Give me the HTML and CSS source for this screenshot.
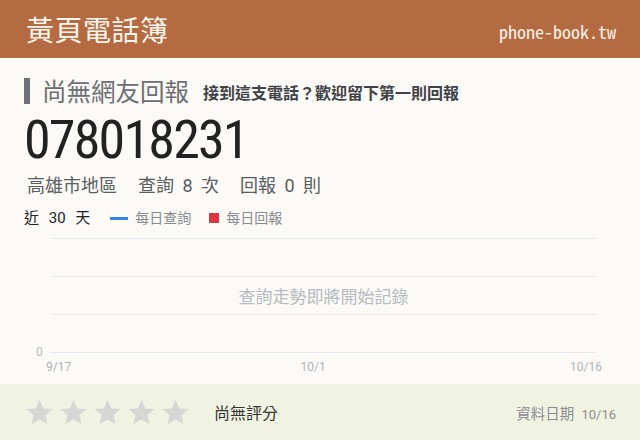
FILE: index.html
```html
<!DOCTYPE html>
<html lang="zh-Hant">
<head>
<meta charset="utf-8">
<title>078018231 - 黃頁電話簿</title>
<link rel="stylesheet" href="styles.css">
</head>
<body>
<header class="topbar">
  <h1 class="brand">黃頁電話簿</h1>
  <span class="domain">phone-book.tw</span>
</header>

<main class="content">
  <div class="status">
    <h2 class="status-title">尚無網友回報</h2>
    <span class="status-hint">接到這支電話？歡迎留下第一則回報</span>
  </div>

  <div class="number">078018231</div>

  <div class="meta">
    <span class="meta-item">高雄市地區</span>
    <span class="meta-item">查詢 8 次</span>
    <span class="meta-item">回報 0 則</span>
  </div>

  <div class="chart-head">
    <span class="range">近 30 天</span>
    <span class="legend"><i class="swatch swatch-line"></i>每日查詢</span>
    <span class="legend"><i class="swatch swatch-box"></i>每日回報</span>
  </div>

  <div class="chart">
    <div class="plot">
      <div class="grid-row"></div>
      <div class="grid-row empty-note">查詢走勢即將開始記錄</div>
      <div class="grid-row"></div>
      <div class="baseline"><span class="y-label">0</span></div>
    </div>
    <div class="x-axis">
      <span>9/17</span>
      <span class="gap-a"></span>
      <span>10/1</span>
      <span class="gap-b"></span>
      <span>10/16</span>
    </div>
  </div>
</main>

<footer class="rating">
  <div class="stars">
    <svg class="star" viewBox="0 0 24 24"><path d="M12 1.5l3.1 7.1 7.7.6-5.9 5 1.8 7.5L12 17.7l-6.7 4 1.8-7.5-5.9-5 7.7-.6z"/></svg>
    <svg class="star" viewBox="0 0 24 24"><path d="M12 1.5l3.1 7.1 7.7.6-5.9 5 1.8 7.5L12 17.7l-6.7 4 1.8-7.5-5.9-5 7.7-.6z"/></svg>
    <svg class="star" viewBox="0 0 24 24"><path d="M12 1.5l3.1 7.1 7.7.6-5.9 5 1.8 7.5L12 17.7l-6.7 4 1.8-7.5-5.9-5 7.7-.6z"/></svg>
    <svg class="star" viewBox="0 0 24 24"><path d="M12 1.5l3.1 7.1 7.7.6-5.9 5 1.8 7.5L12 17.7l-6.7 4 1.8-7.5-5.9-5 7.7-.6z"/></svg>
    <svg class="star" viewBox="0 0 24 24"><path d="M12 1.5l3.1 7.1 7.7.6-5.9 5 1.8 7.5L12 17.7l-6.7 4 1.8-7.5-5.9-5 7.7-.6z"/></svg>
  </div>
  <span class="rating-text">尚無評分</span>
  <span class="data-date">資料日期 <span class="num">10/16</span></span>
</footer>
</body>
</html>
```

FILE: styles.css
```css
* {
  box-sizing: border-box;
}

html,
body {
  margin: 0;
  padding: 0;
}

body {
  width: 640px;
  height: 440px;
  background: #fbfaf6;
  font-family: Roboto, "Noto Sans CJK TC", sans-serif;
  color: #333;
  display: flex;
  flex-direction: column;
}

/* top bar */
.topbar {
  height: 58px;
  background: #b46b41;
  display: flex;
  align-items: center;
  justify-content: space-between;
  padding: 0 24px 0 26px;
}

.brand {
  margin: 0;
  font-family: "Noto Sans CJK TC", sans-serif;
  font-weight: 400;
  font-size: 28px;
  line-height: 1;
  color: #fdf6ee;
  letter-spacing: 0.5px;
}

.domain {
  font-family: "Noto Sans Mono CJK TC", "DejaVu Sans Mono", monospace;
  font-size: 18px;
  color: #fbf1e6;
  padding-top: 4px;
}

/* main block */
.content {
  flex: 1;
  padding: 20px 24px 0 24px;
}

.status {
  height: 26px;
  display: flex;
  align-items: center;
}

.status-title {
  margin: 0;
  height: 26px;
  border-left: 6px solid #6e7276;
  padding-left: 12px;
  font-family: "Noto Sans CJK TC", sans-serif;
  font-weight: 400;
  font-size: 24.5px;
  line-height: 26px;
  color: #6c7074;
}

.status-hint {
  margin-left: 14px;
  font-family: "Noto Sans CJK TC", sans-serif;
  font-weight: 700;
  font-size: 16px;
  color: #3f4247;
  padding-top: 2px;
}

.number {
  margin-top: 6px;
  height: 60px;
  font-family: "Roboto Condensed", Roboto, sans-serif;
  font-weight: 400;
  font-size: 54px;
  letter-spacing: -1.8px;
  line-height: 60px;
  color: #222;
}

.meta {
  margin-top: 4px;
  height: 24px;
  padding-left: 3px;
  display: flex;
  gap: 21px;
  font-size: 18px;
  line-height: 24px;
  word-spacing: 4px;
  color: #5a5d61;
}

.chart-head {
  margin-top: 10px;
  height: 20px;
  display: flex;
  align-items: center;
  font-size: 14px;
  line-height: 20px;
}

.range {
  color: #222;
  font-size: 15px;
  word-spacing: 6px;
  margin-right: 20px;
}

.legend {
  display: flex;
  align-items: center;
  color: #888b90;
  margin-right: 18px;
}

.swatch {
  display: inline-block;
  margin-right: 7px;
}

.swatch-line {
  width: 18px;
  height: 3px;
  background: #3584f0;
}

.swatch-box {
  width: 10px;
  height: 10px;
  background: #de3545;
}

/* chart */
.chart {
  margin-top: 10px;
}

.plot {
  margin-left: 26px;
  width: 547px;
}

.grid-row {
  height: 38px;
  border-top: 1px solid #e6e9ee;
}

.empty-note {
  display: flex;
  align-items: center;
  justify-content: center;
  font-family: "Noto Sans CJK TC", sans-serif;
  font-size: 17px;
  color: #b6bac1;
}

.baseline {
  height: 1px;
  background: #e6e9ee;
  display: flex;
  align-items: center;
}

.y-label {
  margin-left: -14px;
  font-size: 12px;
  color: #b8bbc0;
  line-height: 12px;
  margin-top: -2px;
}

.x-axis {
  margin-top: 7px;
  margin-left: 22px;
  width: 556px;
  display: grid;
  grid-template-columns: auto 229fr auto 244fr auto;
  font-size: 12px;
  line-height: 14px;
  color: #b0b4ba;
}

/* rating footer */
.rating {
  height: 56px;
  background: #f1f3e2;
  display: flex;
  align-items: center;
  padding: 0 24px 0 25px;
}

.stars {
  display: flex;
  gap: 5px;
}

.star {
  width: 29px;
  height: 29px;
  fill: #d6d7d4;
}

.rating-text {
  margin-left: 24px;
  font-family: "Noto Sans CJK TC", sans-serif;
  font-size: 16px;
  color: #333;
}

.data-date {
  margin-left: auto;
  font-family: "Noto Sans CJK TC", sans-serif;
  font-size: 14.5px;
  color: #8a8d90;
}

.data-date .num {
  font-family: Roboto, sans-serif;
  font-size: 13px;
  margin-left: 4px;
}
```
